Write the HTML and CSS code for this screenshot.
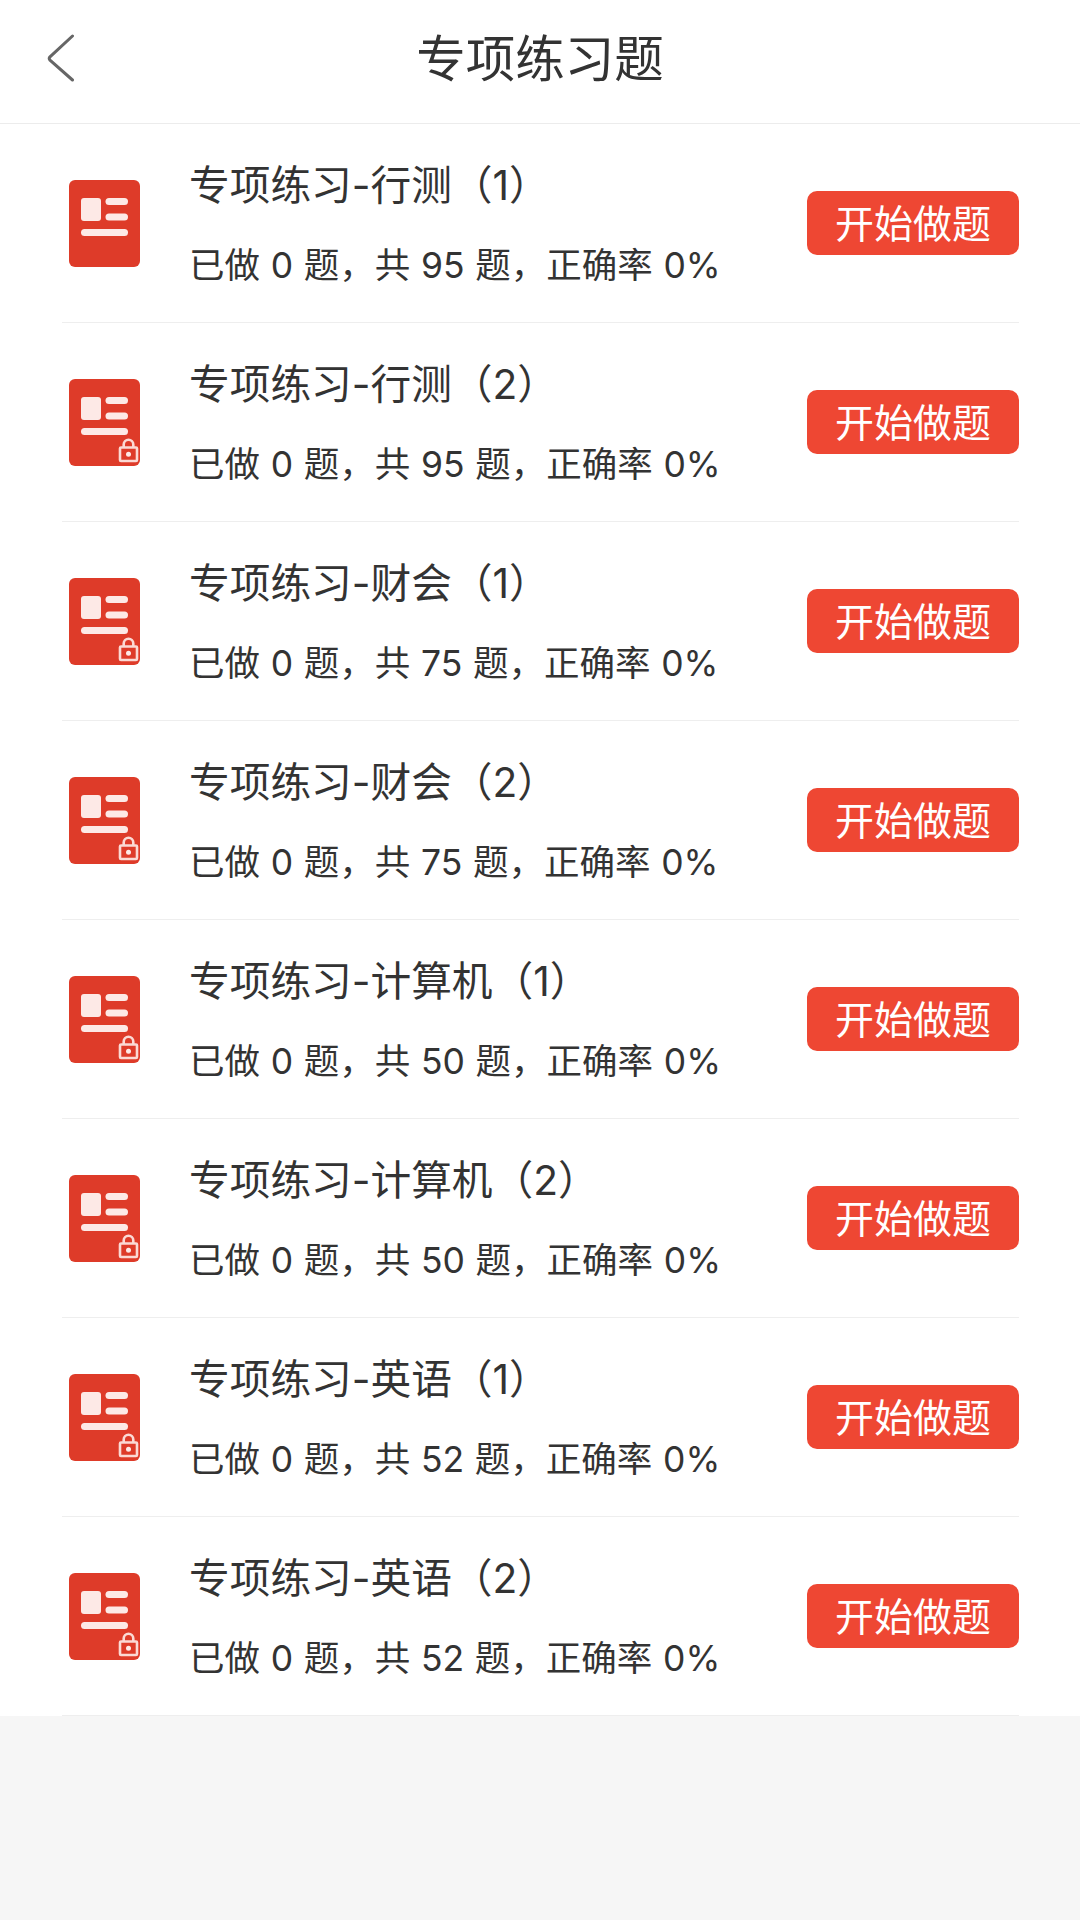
FILE: index.html
```
<!DOCTYPE html>
<html lang="zh-CN">
<head>
  <meta charset="UTF-8" />
  <title>专项练习题</title>
  <link rel="stylesheet" href="styles.css">
</head>
<body>
  <!-- shared icons -->
  <svg class="sprite" width="0" height="0">
    <symbol id="paper" viewBox="0 0 71 87">
      <rect width="71" height="87" rx="6" fill="#de3b29"/>
      <g fill="#fde9e6">
        <rect x="12" y="18" width="20" height="23" rx="3"/>
        <rect x="36.500" y="18" width="22.500" height="7" rx="3.500"/>
        <rect x="36.500" y="33.500" width="22.500" height="7" rx="3.500"/>
        <rect x="12" y="49" width="47" height="7" rx="3.500"/>
      </g>
    </symbol>
    <symbol id="lock" viewBox="0 0 71 87">
      <g fill="none" stroke="#fbd9d4" stroke-width="2.600">
        <rect x="51" y="68.500" width="17" height="13.500" rx="1"/>
        <path d="M54.700 68.500v-3a4.800 4.800 0 0 1 9.600 0v3"/>
      </g>
      <circle cx="59.500" cy="75.200" r="2.500" fill="#fde9e6"/>
    </symbol>
  </svg>

  <header class="header">
    <svg class="back" viewBox="0 0 28 48" width="28" height="48"><path d="M25.500 2 3 22.800q-1.500 1.700 0 3.400L25.500 46"/></svg>
    <h1>专项练习题</h1>
  </header>

  <ul class="list">
    <li class="item">
      <svg class="icon"><use href="#paper"/></svg>
      <div class="info">
        <div class="name">专项练习-行测（1）</div>
        <div class="stat">已做 0 题，共 95 题，正确率 0%</div>
      </div>
      <button class="start">开始做题</button>
    </li>
    <li class="item">
      <svg class="icon"><use href="#paper"/><use href="#lock"/></svg>
      <div class="info">
        <div class="name">专项练习-行测（2）</div>
        <div class="stat">已做 0 题，共 95 题，正确率 0%</div>
      </div>
      <button class="start">开始做题</button>
    </li>
    <li class="item">
      <svg class="icon"><use href="#paper"/><use href="#lock"/></svg>
      <div class="info">
        <div class="name">专项练习-财会（1）</div>
        <div class="stat">已做 0 题，共 75 题，正确率 0%</div>
      </div>
      <button class="start">开始做题</button>
    </li>
    <li class="item">
      <svg class="icon"><use href="#paper"/><use href="#lock"/></svg>
      <div class="info">
        <div class="name">专项练习-财会（2）</div>
        <div class="stat">已做 0 题，共 75 题，正确率 0%</div>
      </div>
      <button class="start">开始做题</button>
    </li>
    <li class="item">
      <svg class="icon"><use href="#paper"/><use href="#lock"/></svg>
      <div class="info">
        <div class="name">专项练习-计算机（1）</div>
        <div class="stat">已做 0 题，共 50 题，正确率 0%</div>
      </div>
      <button class="start">开始做题</button>
    </li>
    <li class="item">
      <svg class="icon"><use href="#paper"/><use href="#lock"/></svg>
      <div class="info">
        <div class="name">专项练习-计算机（2）</div>
        <div class="stat">已做 0 题，共 50 题，正确率 0%</div>
      </div>
      <button class="start">开始做题</button>
    </li>
    <li class="item">
      <svg class="icon"><use href="#paper"/><use href="#lock"/></svg>
      <div class="info">
        <div class="name">专项练习-英语（1）</div>
        <div class="stat">已做 0 题，共 52 题，正确率 0%</div>
      </div>
      <button class="start">开始做题</button>
    </li>
    <li class="item">
      <svg class="icon"><use href="#paper"/><use href="#lock"/></svg>
      <div class="info">
        <div class="name">专项练习-英语（2）</div>
        <div class="stat">已做 0 题，共 52 题，正确率 0%</div>
      </div>
      <button class="start">开始做题</button>
    </li>
  </ul>
</body>
</html>
```
FILE: styles.css
```
* { box-sizing: border-box; }
body {
  margin: 0;
  min-height: 1920px;
  background: #f6f6f6;
  color: #333;
  font-family: Inter, "Noto Sans CJK SC", sans-serif;
}
.sprite { display: block; }
.header {
  display: grid;
  grid-template-columns: 120px 1fr 120px;
  align-items: center;
  height: 124px;
  padding-bottom: 8px;
  background: #fff;
  border-bottom: 1px solid #ececec;
}
.back {
  margin-left: 47px;
  fill: none;
  stroke: #666;
  stroke-width: 3;
  stroke-linecap: round;
}
h1 {
  margin: 0;
  padding-top: 2px;
  font-size: 49.5px;
  font-weight: 400;
  line-height: 60px;
  text-align: center;
}
.list {
  margin: 0;
  padding: 0 61px 0 62px;
  background: #fff;
  list-style: none;
}
.item {
  display: flex;
  align-items: center;
  height: 199px;
  padding-left: 7px;
  border-bottom: 1px solid #eee;
}
.icon {
  width: 71px;
  height: 87px;
}
.info {
  flex: 1;
  margin-left: 49px;
  padding-top: 5px;
  white-space: nowrap;
}
.name {
  font-size: 40.7px;
  line-height: 80px;
}
.stat {
  font-size: 35.5px;
  line-height: 80px;
  word-spacing: 0.7px;
}
.start {
  width: 212px;
  height: 64px;
  padding: 1px 0 0;
  border: none;
  border-radius: 10px;
  background: #ee4733;
  color: #fff;
  font-family: inherit;
  font-size: 39px;
  line-height: 63px;
}
```
